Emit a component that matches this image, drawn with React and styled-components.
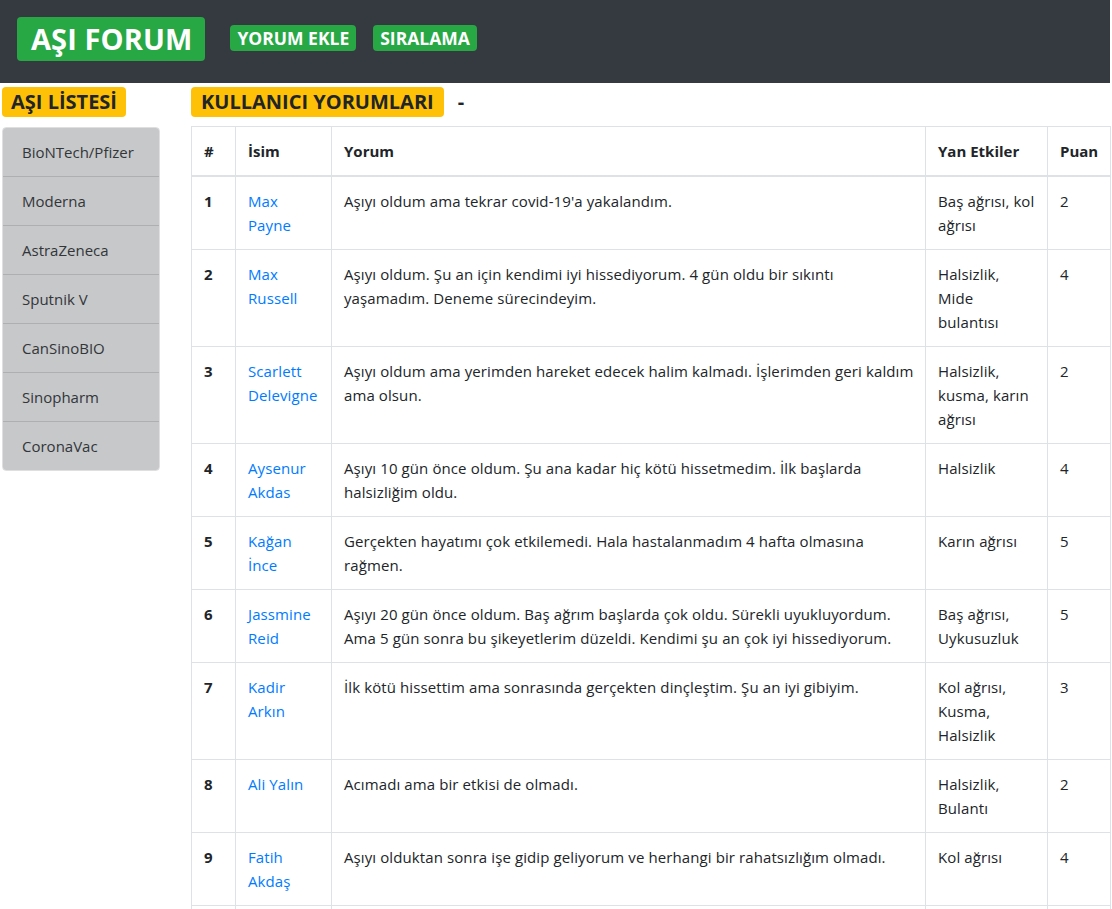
import React from "react";
import styled, { createGlobalStyle } from "styled-components";

const Global = createGlobalStyle`
  html, body { margin: 0; padding: 0; background: #fff; }
  body {
    font-family: "Open Sans", "Noto Sans", "Liberation Sans", sans-serif;
    font-size: 15px;
    line-height: 24px;
    color: #212529;
  }
  * { box-sizing: border-box; }
`;

const Header = styled.header`
  background: #343a40;
  height: 83px;
  width: 1110px;
  display: flex;
  align-items: flex-start;
  padding: 17px 0 0 17px;
  gap: 25px;
`;

const Brand = styled.a`
  background: #28a745;
  color: #fff;
  font-weight: 700;
  font-size: 29px;
  line-height: 44px;
  height: 44px;
  padding: 0 13px 0 14px;
  border-radius: 4px;
  text-decoration: none;
  letter-spacing: 0.1px;
`;

const NavGroup = styled.nav`
  display: flex;
  gap: 17px;
  margin-top: 8px;
`;

const NavButton = styled.a`
  background: #28a745;
  color: #fff;
  font-weight: 700;
  font-size: 17.5px;
  line-height: 26px;
  height: 26px;
  padding: 0 7px;
  border-radius: 4px;
  text-decoration: none;
`;

const Body = styled.div`
  display: flex;
  align-items: flex-start;
  padding-top: 4px;
`;

const Sidebar = styled.aside`
  width: 191px;
  padding-left: 2px;
  flex-shrink: 0;
`;

const Main = styled.main`
  width: 919px;
  flex-shrink: 0;
`;

const TitleRow = styled.div`
  display: flex;
  align-items: center;
  gap: 14px;
  height: 30px;
`;

const Badge = styled.h2`
  display: inline-block;
  margin: 0;
  background: #ffc107;
  color: #212529;
  font-size: 20px;
  font-weight: 700;
  line-height: 30px;
  height: 30px;
  padding: 0 ${(p) => p.$pad || 8}px;
  border-radius: 4px;
  white-space: nowrap;
`;

const Dash = styled.span`
  font-weight: 700;
  font-size: 20px;
`;

const ListGroup = styled.ul`
  list-style: none;
  margin: 10px 0 0;
  padding: 0;
  width: 158px;
  border-radius: 4px;
  overflow: hidden;
  border: 1px solid rgba(0, 0, 0, 0.125);
`;

const ListItem = styled.li`
  background: #c6c8ca;
  color: #333639;
  padding: 12px 20px 12px 19px;
  height: 49px;
  border-top: 1px solid rgba(0, 0, 0, 0.125);
  &:first-child { border-top: none; height: 48px; }
  white-space: nowrap;
`;

const Table = styled.table`
  margin-top: 9px;
  width: 919px;
  border-collapse: collapse;
  table-layout: fixed;
  border: 1px solid #dee2e6;
`;

const Th = styled.th`
  text-align: left;
  font-weight: 700;
  padding: 12px;
  border: 1px solid #dee2e6;
  border-bottom: 2px solid #dee2e6;
  vertical-align: bottom;
  white-space: nowrap;
`;

const Td = styled.td`
  padding: 12px;
  border: 1px solid #dee2e6;
  vertical-align: top;
  white-space: nowrap;
  letter-spacing: 0.1px;
  font-weight: ${(p) => (p.$bold ? 700 : 400)};
`;

const NameLink = styled.a`
  color: #007bff;
  text-decoration: none;
`;

const vaccines = [
  "BioNTech/Pfizer",
  "Moderna",
  "AstraZeneca",
  "Sputnik V",
  "CanSinoBIO",
  "Sinopharm",
  "CoronaVac",
];

const rows = [
  {
    name: ["Max", "Payne"],
    text: ["Aşıyı oldum ama tekrar covid-19'a yakalandım."],
    side: ["Baş ağrısı, kol", "ağrısı"],
    score: 2,
  },
  {
    name: ["Max", "Russell"],
    text: [
      "Aşıyı oldum. Şu an için kendimi iyi hissediyorum. 4 gün oldu bir sıkıntı",
      "yaşamadım. Deneme sürecindeyim.",
    ],
    side: ["Halsizlik,", "Mide", "bulantısı"],
    score: 4,
  },
  {
    name: ["Scarlett", "Delevigne"],
    text: [
      "Aşıyı oldum ama yerimden hareket edecek halim kalmadı. İşlerimden geri kaldım",
      "ama olsun.",
    ],
    side: ["Halsizlik,", "kusma, karın", "ağrısı"],
    score: 2,
  },
  {
    name: ["Aysenur", "Akdas"],
    text: [
      "Aşıyı 10 gün önce oldum. Şu ana kadar hiç kötü hissetmedim. İlk başlarda",
      "halsizliğim oldu.",
    ],
    side: ["Halsizlik"],
    score: 4,
  },
  {
    name: ["Kağan", "İnce"],
    text: [
      "Gerçekten hayatımı çok etkilemedi. Hala hastalanmadım 4 hafta olmasına",
      "rağmen.",
    ],
    side: ["Karın ağrısı"],
    score: 5,
  },
  {
    name: ["Jassmine", "Reid"],
    text: [
      "Aşıyı 20 gün önce oldum. Baş ağrım başlarda çok oldu. Sürekli uyukluyordum.",
      "Ama 5 gün sonra bu şikeyetlerim düzeldi. Kendimi şu an çok iyi hissediyorum.",
    ],
    side: ["Baş ağrısı,", "Uykusuzluk"],
    score: 5,
  },
  {
    name: ["Kadir", "Arkın"],
    text: ["İlk kötü hissettim ama sonrasında gerçekten dinçleştim. Şu an iyi gibiyim."],
    side: ["Kol ağrısı,", "Kusma,", "Halsizlik"],
    score: 3,
  },
  {
    name: ["Ali Yalın"],
    text: ["Acımadı ama bir etkisi de olmadı."],
    side: ["Halsizlik,", "Bulantı"],
    score: 2,
  },
  {
    name: ["Fatih", "Akdaş"],
    text: ["Aşıyı olduktan sonra işe gidip geliyorum ve herhangi bir rahatsızlığım olmadı."],
    side: ["Kol ağrısı"],
    score: 4,
  },
];

const Lines = ({ lines }) =>
  lines.map((l, i) => (
    <React.Fragment key={i}>
      {i > 0 && <br />}
      {l}
    </React.Fragment>
  ));

export default function App() {
  return (
    <>
      <Global />
      <Header>
        <Brand href="#">AŞI FORUM</Brand>
        <NavGroup>
          <NavButton href="#">YORUM EKLE</NavButton>
          <NavButton href="#">SIRALAMA</NavButton>
        </NavGroup>
      </Header>
      <Body>
        <Sidebar>
          <Badge $pad={9}>AŞI LİSTESİ</Badge>
          <ListGroup>
            {vaccines.map((v) => (
              <ListItem key={v}>{v}</ListItem>
            ))}
          </ListGroup>
        </Sidebar>
        <Main>
          <TitleRow>
            <Badge $pad={10}>KULLANICI YORUMLARI</Badge>
            <Dash>-</Dash>
          </TitleRow>
          <Table>
            <colgroup>
              <col style={{ width: 44 }} />
              <col style={{ width: 96 }} />
              <col style={{ width: 594 }} />
              <col style={{ width: 122 }} />
              <col style={{ width: 63 }} />
            </colgroup>
            <thead>
              <tr>
                <Th>#</Th>
                <Th>İsim</Th>
                <Th>Yorum</Th>
                <Th>Yan Etkiler</Th>
                <Th>Puan</Th>
              </tr>
            </thead>
            <tbody>
              {rows.map((r, i) => (
                <tr key={i}>
                  <Td $bold>{i + 1}</Td>
                  <Td>
                    <NameLink href="#">
                      <Lines lines={r.name} />
                    </NameLink>
                  </Td>
                  <Td>
                    <Lines lines={r.text} />
                  </Td>
                  <Td>
                    <Lines lines={r.side} />
                  </Td>
                  <Td>{r.score}</Td>
                </tr>
              ))}
              <tr>
                <Td $bold>&nbsp;</Td>
                <Td>&nbsp;</Td>
                <Td>&nbsp;</Td>
                <Td>&nbsp;</Td>
                <Td>&nbsp;</Td>
              </tr>
            </tbody>
          </Table>
        </Main>
      </Body>
    </>
  );
}
